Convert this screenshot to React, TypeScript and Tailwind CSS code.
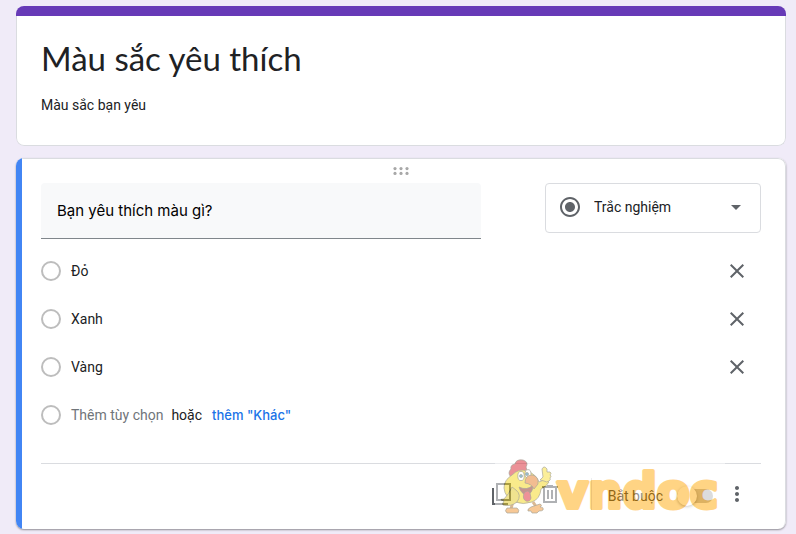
import { useState } from "react";
import { MdArrowDropDown, MdClose, MdMoreVert, MdRadioButtonChecked } from "react-icons/md";

const initialOptions = [
  { id: "do", label: "Đỏ" },
  { id: "xanh", label: "Xanh" },
  { id: "vang", label: "Vàng" },
];

export default function App() {
  return (
    <div className="min-h-screen bg-[#f0ebf8] pt-1.5 pr-2.5 pb-1 pl-4 font-['Roboto',sans-serif] text-sm text-[#202124]">
      <main className="flex flex-col gap-3">
        <FormHeader />
        <QuestionCard />
      </main>
    </div>
  );
}

function FormHeader() {
  return (
    <header className="overflow-hidden rounded-lg">
      <div className="h-2.5 bg-[#673ab7]" />
      <div className="rounded-b-lg border border-t-0 border-[#dadce0] bg-white px-6 pt-5 pb-[30px]">
        <h1 className="font-['Lato',sans-serif] text-[33px] leading-[44px]">Màu sắc yêu thích</h1>
        <p className="mt-[15px] leading-5">Màu sắc bạn yêu</p>
      </div>
    </header>
  );
}

function QuestionCard() {
  const [question, setQuestion] = useState("Bạn yêu thích màu gì?");
  const [options, setOptions] = useState(initialOptions);

  return (
    <section className="flex overflow-hidden rounded-lg bg-white shadow-[0_1px_2px_rgba(0,0,0,0.4)]">
      <div className="w-1.5 shrink-0 bg-[#4285f4]" />
      <div className="min-w-0 flex-1 rounded-r-lg border-t border-r border-[#dadce0] pr-6 pl-[19px]">
        <div className="flex h-6 items-center justify-center">
          <DragHandle />
        </div>

        <div className="flex items-start gap-16">
          <input
            aria-label="Câu hỏi"
            value={question}
            onChange={(e) => setQuestion(e.target.value)}
            className="h-14 min-w-0 flex-1 rounded-t border-b border-[#80868b] bg-[#f8f9fa] px-4 font-['Inter',sans-serif] text-[15px] text-black outline-none"
          />
          <div className="relative w-[216px] shrink-0">
            <select
              aria-label="Loại câu hỏi"
              className="h-[50px] w-full appearance-none rounded border border-[#dadce0] bg-white pb-0.5 pl-12 text-sm outline-none"
            >
              <option>Trắc nghiệm</option>
            </select>
            <MdRadioButtonChecked className="pointer-events-none absolute top-3 left-[13px] size-6 text-[#5f6368]" />
            <MdArrowDropDown className="pointer-events-none absolute top-3 right-[13px] size-6 text-[#5f6368]" />
          </div>
        </div>

        <ul className="mt-2">
          {options.map((option) => (
            <li key={option.id} className="flex h-12 items-center">
              <label className="flex flex-1 items-center gap-2.5">
                <OptionRadio />
                {option.label}
              </label>
              <button
                type="button"
                aria-label={`Xóa ${option.label}`}
                onClick={() => setOptions(options.filter((o) => o.id !== option.id))}
                className="mr-3 text-[#5f6368]"
              >
                <MdClose className="size-6" />
              </button>
            </li>
          ))}
          <li className="flex h-12 items-center">
            <label className="flex items-center gap-2.5 text-[#70757a]">
              <OptionRadio />
              Thêm tùy chọn
            </label>
            <span className="ml-2">hoặc</span>
            <button type="button" className="ml-2.5 font-['Inter',sans-serif] text-[13px] font-medium text-[#1a73e8]">
              thêm "Khác"
            </button>
          </li>
        </ul>

        <footer className="relative mt-6 flex h-[66px] items-start justify-end border-t border-[#dadce0] pt-3.5 text-[#5f6368]">
          <button type="button" aria-label="Sao chép" className="flex h-8 w-12 items-center justify-center">
            <CopyIcon />
          </button>
          <button type="button" aria-label="Xóa" className="flex h-8 w-12 items-center justify-center">
            <TrashIcon />
          </button>
          <div className="ml-4 h-8 w-px bg-[#dadce0]" />
          <label className="ml-4 flex h-9 items-center gap-3.5 text-[#202124]">
            Bắt buộc
            <input
              type="checkbox"
              role="switch"
              className="relative h-3.5 w-9 appearance-none rounded-full bg-[#b9b9b9] before:absolute before:-top-[3px] before:left-0 before:size-5 before:rounded-full before:bg-white before:shadow-[0_1px_3px_rgba(0,0,0,0.4)] checked:before:left-4"
            />
          </label>
          <button type="button" aria-label="Tùy chọn khác" className="mr-3 ml-3 flex h-8 items-center">
            <MdMoreVert className="size-6" />
          </button>
          <Watermark />
        </footer>
      </div>
    </section>
  );
}

function OptionRadio() {
  return (
    <input
      type="radio"
      name="answer"
      disabled
      className="size-5 shrink-0 appearance-none rounded-full border-2 border-[#bdbdbd] bg-white"
    />
  );
}

function DragHandle() {
  return (
    <svg width="16" height="8" viewBox="0 0 16 8" fill="#a8a8a8" aria-hidden="true">
      {[2, 8, 14].map((x) => (
        <g key={x}>
          <circle cx={x} cy="1.6" r="1.6" />
          <circle cx={x} cy="6.4" r="1.6" />
        </g>
      ))}
    </svg>
  );
}

function CopyIcon() {
  return (
    <svg width="24" height="24" viewBox="0 0 24 24" fill="none" stroke="currentColor" strokeWidth="2" aria-hidden="true">
      <path d="M6 2h13v16H6zM2 6v16h15" />
    </svg>
  );
}

function TrashIcon() {
  return (
    <svg width="24" height="24" viewBox="0 0 24 24" fill="none" stroke="currentColor" strokeWidth="2" aria-hidden="true">
      <path d="M3 5h16M8 4h6M5 5v15h12V5M9 8v9M13 8v9" />
    </svg>
  );
}

// Half-transparent brand stamp that lies over the footer controls
function Watermark() {
  return (
    <div className="pointer-events-none absolute -top-1.5 right-9 bg-white opacity-50">
      <svg width="230" height="59" viewBox="0 0 230 59" className="overflow-visible" aria-label="vndoc">
        <g stroke="#55503a" strokeWidth="0.7" strokeLinejoin="round">
          {/* legs and feet */}
          <path d="M18 43l-2 8M38 44l4 6" fill="none" stroke="#b9752a" strokeWidth="3" />
          <path d="M12 50h10q3 2 1 5H12q-3-2 0-5z" fill="#f0922f" />
          <path d="M36 49l9-3q3 1 0 3q4 0 3 3q-1 1-4 1l-2 2h-5l-1-2h-3q-1-2 3-4z" fill="#f0922f" />
          {/* comb */}
          <path d="M16 19q-4-4 0-8q-1-4 4-5q1-5 8-4q6 2 3 7q2 3-1 7z" fill="#d92632" />
          {/* body */}
          <path d="M17 17q7-7 15-4q9 3 12 11q3-1 6-3l4 3q-3 5-8 7q-1 10-9 13q-9 3-17 0q-10-4-11-14q0-8 8-13z" fill="#f4d719" />
          {/* wing */}
          <path d="M17 29q-3 7-8 12q-4 0-3 1l3 1q-2 3-1 4q8 2 14-3q5-7-1-12z" fill="#e3c822" />
          {/* thumbs-up hand */}
          <path d="M48 19l-1-8q2-4 5 0v3h3q2 1 0 3q2 1 0 3q1 2-1 3q-2 2-5 0l-4-1z" fill="#f8df35" />
          {/* eyes */}
          <ellipse cx="26" cy="18" rx="3.2" ry="4.6" fill="#fff" />
          <ellipse cx="33" cy="16" rx="3" ry="4.4" fill="#fff" />
          <circle cx="26" cy="18" r="1.5" fill="#2388b5" />
          <circle cx="32" cy="16" r="1.5" fill="#2388b5" />
          {/* mouth and wattle */}
          <path d="M24 29q8 4 14-2q0 8-6 10q-6-1-8-8z" fill="#8c2b22" />
          <path d="M29 35q4-4 6 0l1 5q-1 4-5 3q-4-2-2-8z" fill="#dc2834" />
          <path d="M30 25q0-8 7-8q7 1 6 9l-4 5q-2-5-9-6z" fill="#e67c25" />
        </g>
        <text
          x="62"
          y="50"
          fill="#ffaa0c"
          stroke="#ffaa0c"
          strokeWidth="4"
          strokeLinejoin="round"
          className="font-['DejaVu_Sans',sans-serif] text-[48px] font-bold"
        >
          vndoc
        </text>
      </svg>
    </div>
  );
}
